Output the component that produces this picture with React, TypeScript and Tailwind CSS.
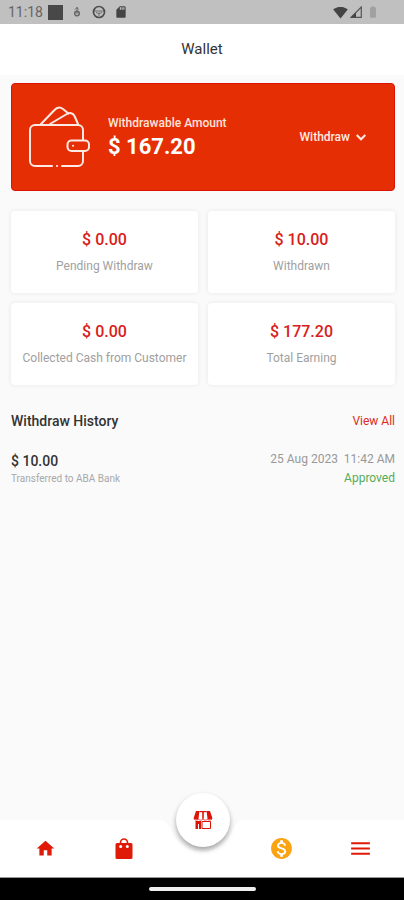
import React from 'react';
import {
  MdBatteryFull,
  MdHome,
  MdMenu,
  MdMonetizationOn,
  MdSdCard,
  MdSignalWifi4Bar
} from 'react-icons/md';

interface Stat {
  label: string;
  amount: string;
}

interface Withdrawal {
  amount: string;
  note: string;
  date: string;
  status: string;
}

const stats: Stat[] = [
  { label: 'Pending Withdraw', amount: '$ 0.00' },
  { label: 'Withdrawn', amount: '$ 10.00' },
  { label: 'Collected Cash from Customer', amount: '$ 0.00' },
  { label: 'Total Earning', amount: '$ 177.20' }
];

const history: Withdrawal[] = [
  {
    amount: '$ 10.00',
    note: 'Transferred to ABA Bank',
    date: '25 Aug 2023  11:42 AM',
    status: 'Approved'
  }
];

const WalletIcon = () => (
  <svg
    className="h-[62px] w-[62px] shrink-0"
    viewBox="0 0 62 62"
    fill="none"
    stroke="#ffe9e4"
    strokeWidth="2"
    strokeLinecap="round"
    strokeLinejoin="round"
    aria-hidden="true"
  >
    <path d="M23 60H6a5 5 0 0 1-5-5V24a5 5 0 0 1 5-5h43a5 5 0 0 1 5 5v10" />
    <path d="M54 45v10a5 5 0 0 1-5 5H33" />
    <path d="M28 60h.1" />
    <path d="M12 18 25 4.500c3-3.500 6.500-3.500 9-1.500l5.500 4.500" />
    <path d="M21 18 37 8.500c4-2.500 7-1.500 8.500 1.500l3.500 8" />
    <rect x="38.500" y="34.500" width="21.500" height="10.500" rx="4" />
    <path d="M44 39.700h.1" />
  </svg>
);

const BagIcon = () => (
  <svg className="h-[22px] w-[18px]" viewBox="0 0 18 22" aria-hidden="true">
    <path d="M5.500 6V4.500a3.500 3.500 0 0 1 7 0V6" fill="none" stroke="#e01a08" strokeWidth="1.600" />
    <path d="M2 5h14a1.500 1.500 0 0 1 1.500 1.500v13A1.500 1.500 0 0 1 16 21H2a1.500 1.500 0 0 1-1.500-1.500v-13A1.500 1.500 0 0 1 2 5z" fill="#e01a08" />
    <circle cx="5.700" cy="8.500" r="1.500" fill="#fff" />
    <circle cx="12.300" cy="8.500" r="1.500" fill="#fff" />
  </svg>
);

const StoreIcon = () => (
  <svg className="h-5 w-5" viewBox="0 0 20 20" fill="#dc1408" aria-hidden="true">
    <path d="M3 1h3.400L5.400 9.500H2.600L.500 8.500z" />
    <path d="M13.600 1H17l2.500 7.500-2.100 1h-2.800z" />
    <path d="M6.400 1h7.200v1.200H6.400z" />
    <path d="M9.200 1.500h1.600v7.300H9.200z" />
    <path
      d="M1 9.200c1.500 1.300 3 1.300 4.500 0 1.500 1.300 3 1.300 4.500 0 1.500 1.300 3 1.300 4.500 0 1.500 1.300 3 1.300 4.500 0"
      fill="none"
      stroke="#dc1408"
      strokeOpacity="0.7"
    />
    <path d="M2.500 11H8v8H6v-5H5v5H2.500z" />
    <path d="M9 11.500h8.500v7H9z" fill="none" stroke="#dc1408" />
  </svg>
);

const StatusBar = () => (
  <div className="flex h-6 items-center justify-between bg-[#c0c0c0] pr-6 pl-2 text-[#444]">
    <div className="flex items-center">
      <span className="text-sm text-[#666]">11:18</span>
      <span className="ml-[5px] h-[15px] w-[15px] bg-[#484848]" />
      <svg className="ml-2 h-3 w-3" viewBox="0 0 12 12" fill="none" stroke="#666" aria-hidden="true">
        <path d="M6 1v7M4 3.500 6 1.500l1.500 2" />
        <circle cx="6" cy="7.500" r="2.300" strokeWidth="1.500" />
      </svg>
      <svg className="ml-[9px] h-[14px] w-[14px]" viewBox="0 0 14 14" fill="none" stroke="#4c4c4c" aria-hidden="true">
        <circle cx="7" cy="7" r="5.500" strokeWidth="1.700" />
        <path d="M2 6h10M4 7.500l3 1 3-1M7 8v3" strokeOpacity="0.7" />
      </svg>
      <MdSdCard className="ml-2 h-[14px] w-[14px]" />
    </div>
    <div className="flex items-center">
      <MdSignalWifi4Bar className="h-[15px] w-[15px]" />
      <svg className="ml-[2px] h-3 w-3" viewBox="0 0 12 12" aria-hidden="true">
        <path d="M1 11.300 11.300 1v10.300z" fill="none" stroke="#555" strokeWidth="1.200" />
        <path d="M1 11.300 6 6.500v4.800z" fill="#444" />
      </svg>
      <MdBatteryFull className="ml-1 h-[14px] w-[14px] text-[#a0a0a0]" />
    </div>
  </div>
);

const BottomNav = () => (
  <nav className="relative mt-auto bg-white">
    {/* notch under the floating button */}
    <svg
      className="absolute top-0 left-1/2 h-9 w-[88px] -translate-x-1/2"
      viewBox="0 0 88 36"
      fill="#fafafa"
      aria-hidden="true"
    >
      <path d="M0 0c8 0 11 5 13 10a33 33 0 0 0 62 0c2-5 5-10 13-10z" />
    </svg>
    <div className="relative grid h-[57px] grid-cols-5 items-center pr-1 pl-[6px] text-[#e01a08]">
      <button aria-label="Home" className="flex justify-center">
        <MdHome className="h-[21px] w-[21px]" />
      </button>
      <button aria-label="Orders" className="flex justify-center">
        <BagIcon />
      </button>
      <div className="flex justify-center">
        <button
          aria-label="Store"
          className="-mt-14 flex h-[54px] w-[54px] items-center justify-center rounded-full bg-white shadow-[0_3px_5px_rgba(0,0,0,0.35)]"
        >
          <StoreIcon />
        </button>
      </div>
      <button aria-label="Wallet" className="flex justify-center text-[#fca311]">
        <MdMonetizationOn className="h-[25px] w-[25px]" />
      </button>
      <button aria-label="Menu" className="flex justify-center">
        <MdMenu className="h-[25px] w-[25px]" />
      </button>
    </div>
  </nav>
);

export default function App() {
  return (
    <div className="flex min-h-screen flex-col bg-[#fafafa] font-['Roboto',sans-serif] text-[#333]">
      <StatusBar />
      <header className="flex h-[51px] items-center justify-center bg-white">
        <h1 className="text-[15px]">Wallet</h1>
      </header>

      <main className="pt-2 pr-[9px] pl-[11px]">
        <section className="flex h-[108px] items-center rounded border border-[#dc1206] bg-[#e62e04] pr-7 pl-[17px] text-white">
          <WalletIcon />
          <div className="ml-[17px] pt-[3px]">
            <p className="text-xs leading-4 font-medium text-[#ffe4de]">Withdrawable Amount</p>
            <p className="text-[22px] leading-8 font-bold">$ 167.20</p>
          </div>
          <button className="ml-auto flex items-center gap-[6px] text-xs font-medium text-[#ffe9e4]">
            Withdraw
            <svg
              className="h-[10px] w-[10px]"
              viewBox="0 0 10 10"
              fill="none"
              stroke="currentColor"
              strokeWidth="2"
              aria-hidden="true"
            >
              <path d="M.700 3 5 7.300 9.300 3" />
            </svg>
          </button>
        </section>

        <section className="mt-5 grid grid-cols-2 gap-[10px]">
          {stats.map((stat) => (
            <div
              key={stat.label}
              className="flex h-[82px] flex-col items-center justify-center rounded bg-white pt-1 shadow-[0_0_5px_rgba(0,0,0,0.08)]"
            >
              <p className="text-base leading-6 font-medium text-[#d8201a]">{stat.amount}</p>
              <p className="text-xs leading-7 text-[#a0a0a0]">{stat.label}</p>
            </div>
          ))}
        </section>

        <section className="mt-6">
          <div className="flex h-6 items-center justify-between">
            <h2 className="text-sm font-medium">Withdraw History</h2>
            <a href="#history" className="text-xs text-[#dc2a22]">View All</a>
          </div>
          <ul id="history" className="mt-[18px]">
            {history.map((item) => (
              <li key={item.date} className="flex justify-between">
                <div>
                  <p className="text-sm leading-5 font-medium">{item.amount}</p>
                  <p className="text-[10px] leading-4 text-[#a8a8a8]">{item.note}</p>
                </div>
                <div className="text-right text-xs">
                  <p className="leading-4 whitespace-pre text-[#999]">{item.date}</p>
                  <p className="mt-[3px] leading-4 text-[#55ad58]">{item.status}</p>
                </div>
              </li>
            ))}
          </ul>
        </section>
      </main>

      <BottomNav />
      <div className="flex h-[23px] items-center justify-center border-t border-[#999] bg-black">
        <span className="h-1 w-[107px] rounded-full bg-[#eee]" />
      </div>
    </div>
  );
}
